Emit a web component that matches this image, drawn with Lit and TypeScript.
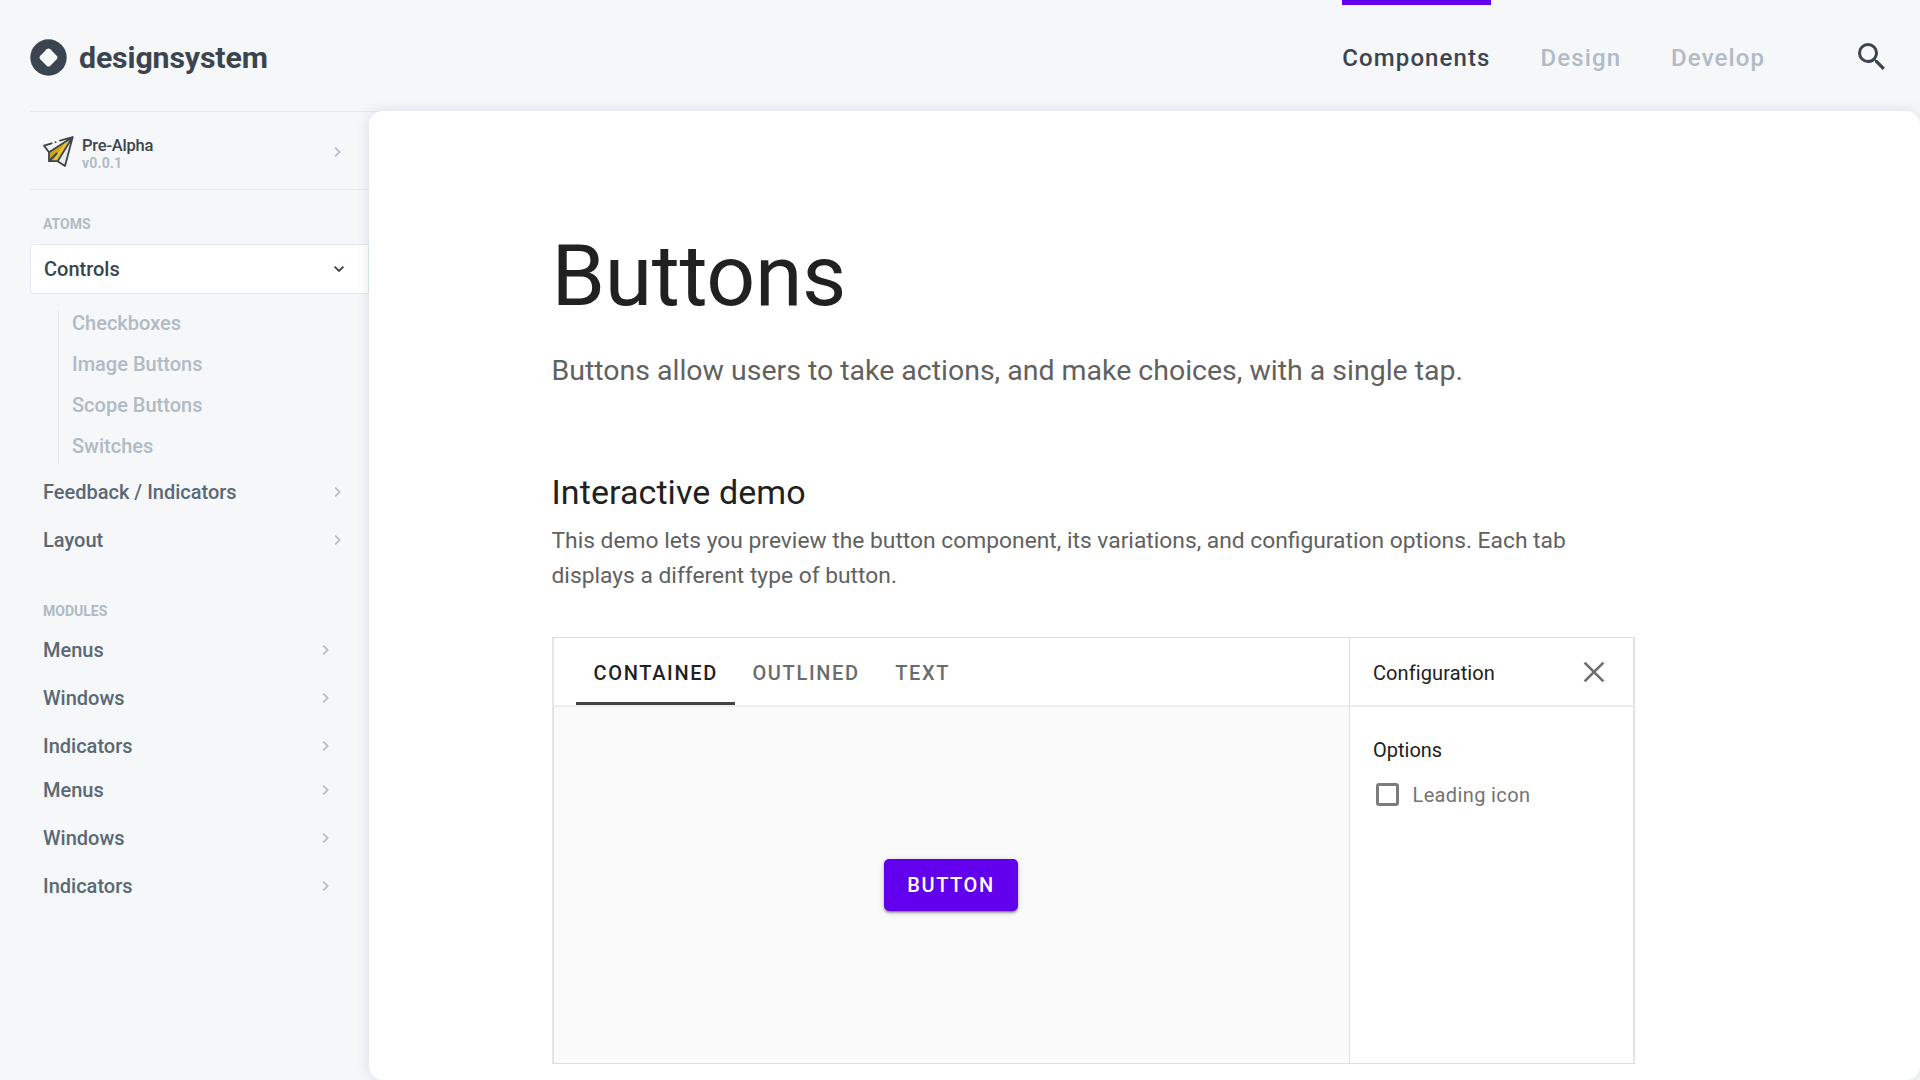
import { LitElement, html, css } from "lit";
import { customElement, property, state } from "lit/decorators.js";
import { classMap } from "lit/directives/class-map.js";

const chevronRight = html`<svg class="chev" width="10" height="12" viewBox="0 0 10 12">
  <path d="M2.2 1.6 6.6 6 2.2 10.4" fill="none" stroke="currentColor" stroke-width="1.7" /></svg>`;

const chevronDown = html`<svg class="chev" width="12" height="10" viewBox="0 0 12 10">
  <path d="M1.6 2.6 6 7 10.4 2.6" fill="none" stroke="currentColor" stroke-width="1.9" /></svg>`;

@customElement("ds-header")
class DsHeader extends LitElement {
  @state() private tabs = ["Components", "Design", "Develop"];
  @state() private active = 0;

  static styles = css`
    :host { display: flex; height: 111px; padding: 0 35px 0 30px; box-sizing: border-box; color: #3b454f; }
    .brand { display: flex; align-items: center; gap: 12px; padding-top: 4px; flex: 1; }
    .name { font-size: 30.3px; font-weight: 700; line-height: 36px; letter-spacing: -0.15px; }
    nav { display: flex; gap: 50px; }
    .tab { border-top: 5px solid transparent; line-height: 106px; font-size: 24px; font-weight: 500;
      letter-spacing: 1.1px; color: #b0bbc5; }
    .on { border-top-color: #6200ee; color: #3b454f; }
    .search { margin: 43px 0 0 93px; }
  `;

  render() {
    return html`
      <div class="brand">
        <svg width="37" height="37" viewBox="0 0 37 37">
          <circle cx="18.5" cy="18.5" r="18.2" fill="#3b454f" />
          <rect x="11.4" y="11.4" width="14.2" height="14.2" rx="2.6" fill="#f5f7f9" transform="rotate(45 18.5 18.5)" />
        </svg>
        <span class="name">designsystem</span>
      </div>
      <nav>${this.tabs.map((t, i) => html`<span class=${classMap({ tab: true, on: i === this.active })}>${t}</span>`)}</nav>
      <svg class="search" width="27" height="27" viewBox="3 3 17.5 17.5" fill="#3b454f">
        <path d="M15.5 14h-.79l-.28-.27A6.471 6.471 0 0 0 16 9.5 6.5 6.5 0 1 0 9.5 16c1.61 0 3.09-.59 4.23-1.57l.27.28v.79l5 4.99L20.49 19l-4.99-5zm-6 0C7.01 14 5 11.99 5 9.5S7.01 5 9.5 5 14 7.01 14 9.5 11.99 14 9.5 14z" />
      </svg>`;
  }
}

@customElement("ds-sidebar")
class DsSidebar extends LitElement {
  static styles = css`
    :host { display: block; width: 369px; flex: none; box-sizing: border-box; padding-left: 30px; }
    .version { display: flex; align-items: center; height: 79px; box-sizing: border-box; width: 355px;
      border-top: 1px solid #e6eaee; border-bottom: 1px solid #e6eaee; padding: 2px 42px 0 13px; color: #3b454f; }
    .plane { margin-right: 8px; }
    .labels { flex: 1; padding-top: 4px; }
    .vname { font-size: 16.5px; font-weight: 500; line-height: 19px; letter-spacing: -0.22px; }
    .vnum { font-size: 14px; font-weight: 700; line-height: 17px; color: #b0bbc5; letter-spacing: 0.15px; }
    .chev { color: #b0bbc5; display: block; }
    .heading { font-size: 14px; font-weight: 700; line-height: 20px; color: #b0bbc5; padding-left: 13px; }
    .atoms { margin-top: 24px; }
    .modules { margin: 41px 0 9px; }
    .open { display: flex; align-items: center; justify-content: space-between; height: 50px; margin-top: 10px;
      box-sizing: border-box; background: #fff; border: 1px solid #e3e9f0; border-radius: 4px 0 0 4px;
      padding: 0 23px 0 13px; font-size: 20px; font-weight: 500; color: #3b454f; }
    .open .chev { color: #3b454f; }
    .sub { display: flex; flex-direction: column; gap: 15px; border-left: 1px solid #e3e7eb; margin: 16px 0 4px 28px;
      padding: 0 0 5px 13px; font-size: 20px; font-weight: 500; line-height: 26px; color: #b0bbc5; }
    .group { display: flex; flex-direction: column; gap: 8px; }
    .group + .group { margin-top: 4px; }
    .row { display: flex; align-items: center; justify-content: space-between; height: 40px; padding: 0 26px 0 13px;
      font-size: 20px; font-weight: 500; color: #5b6875; }
    .first { padding-top: 4px; }
    .inner .row { padding-right: 38px; }
  `;

  private row(name: string) {
    return html`<div class="row"><span>${name}</span>${chevronRight}</div>`;
  }

  render() {
    const modules = ["Menus", "Windows", "Indicators"];
    return html`
      <div class="version">
        <svg class="plane" width="31" height="31" viewBox="0 0 31 31" stroke-linejoin="round" stroke-linecap="round">
          <path d="M1 10 30 1 6.5 16.5z" fill="#f2f4f6" />
          <path d="M30 1 6 16.5V25.5H14z" fill="#e8c23c" />
          <path d="M22 6.5 6 16.5V25.5L10.5 23.5z" fill="#d1a30c" />
          <path d="M30 1 14 25 21.5 30.2z" fill="#e9ebee" />
          <path d="M8.7 7.3 1 9.6 6 16.2V25.2H14.6L22 30 29.7 1 17 4.6M12.5 6.2h.1M6 16.2 29.7 1 14.6 25.2M6.8 24.5 13.6 17.5"
            fill="none" stroke="#3b454f" stroke-width="1.8" />
        </svg>
        <div class="labels"><div class="vname">Pre-Alpha</div><div class="vnum">v0.0.1</div></div>
        ${chevronRight}
      </div>
      <div class="heading atoms">ATOMS</div>
      <div class="open"><span>Controls</span>${chevronDown}</div>
      <div class="sub">${["Checkboxes", "Image Buttons", "Scope Buttons", "Switches"].map((s) => html`<span>${s}</span>`)}</div>
      <div class="group first">${["Feedback / Indicators", "Layout"].map((s) => this.row(s))}</div>
      <div class="heading modules">MODULES</div>
      <div class="group inner">${modules.map((s) => this.row(s))}</div>
      <div class="group inner">${modules.map((s) => this.row(s))}</div>`;
  }
}

@customElement("ds-demo")
class DsDemo extends LitElement {
  @property({ type: Number }) active = 0;

  static styles = css`
    :host { display: grid; grid-template-columns: 1fr 284px; width: 1083px; height: 427px; box-sizing: border-box;
      border: 1px solid #dedede; border-width: 1px 2px; border-left-color: #e4e4e4; border-right-color: #e4e4e4;
      background: #fff; }
    .left, .right { display: flex; flex-direction: column; }
    .right { border-left: 1px solid #dedede; }
    .bar { display: flex; height: 69px; box-sizing: border-box; border-bottom: 2px solid #eee; }
    .tabs { padding-left: 22px; }
    .tab { padding: 7px 18.5px 0 17px; border-bottom: 3px solid transparent; line-height: 57px; font-size: 20px;
      font-weight: 500; letter-spacing: 1.66px; color: #6b6b6b; }
    .on { color: #212121; border-bottom-color: #444; padding: 7px 17.5px 0 17.5px; }
    .stage { flex: 1; display: flex; align-items: center; justify-content: center; background: #fafafa; }
    .btn { width: 134px; height: 52px; margin-right: 2px; border: 0; border-radius: 5px; background: #6200ee; color: #fff;
      font: 500 20px Roboto, sans-serif; letter-spacing: 1.6px; padding: 0 0 0 1px;
      box-shadow: 0 3px 2px -2px rgba(0,0,0,.35), 0 2px 3px rgba(0,0,0,.2), 0 1px 6px rgba(0,0,0,.15); }
    .config { align-items: center; justify-content: space-between; padding: 3px 28.5px 0 23px; font-size: 20px;
      letter-spacing: 0.1px; color: #212121; }
    .close { margin-bottom: 1px; }
    .options { padding: 30px 0 0 23px; font-size: 20px; line-height: 26px; color: #212121; }
    .check { display: flex; align-items: center; gap: 14px; margin: 19px 0 0 2.5px; color: #737373; letter-spacing: 0.37px; }
    .box { width: 23px; height: 23px; box-sizing: border-box; border: 3px solid #7c7c7c; border-radius: 3px; }
  `;

  render() {
    return html`
      <div class="left">
        <div class="bar tabs">${["CONTAINED", "OUTLINED", "TEXT"].map(
          (t, i) => html`<span class=${classMap({ tab: true, on: i === this.active })}>${t}</span>`
        )}</div>
        <div class="stage"><button class="btn">BUTTON</button></div>
      </div>
      <div class="right">
        <div class="bar config"><span>Configuration</span>
          <svg class="close" width="22" height="22" viewBox="0 0 22 22"><path d="M1.6 1.6 20.4 20.4M20.4 1.6 1.6 20.4" stroke="#6f6f6f" stroke-width="2.7" /></svg>
        </div>
        <div class="options">Options
          <div class="check"><span class="box"></span><span>Leading icon</span></div>
        </div>
      </div>`;
  }
}

@customElement("app-root")
class AppRoot extends LitElement {
  static styles = css`
    :host { display: block; width: 1920px; height: 1080px; overflow: hidden; background: #f5f7f9;
      font-family: Roboto, "Liberation Sans", sans-serif; }
    .body { display: flex; height: 969px; }
    main { flex: 1; position: relative; box-sizing: border-box; padding: 115px 0 0 182.5px; background: #fff; border-radius: 14px;
      box-shadow: 0 0 14px rgba(59,80,100,.14); }
    h1 { margin: 0; font-size: 86px; font-weight: 400; line-height: 100px; letter-spacing: -0.4px; color: #212121; }
    .lead { margin: 25px 0 0; font-size: 28.48px; line-height: 40px; color: #616161; }
    h2 { margin: 79px 0 0; font-size: 34px; font-weight: 400; line-height: 44px; letter-spacing: 0.08px; color: #212121; }
    .text { margin: 10.4px 0 43.6px; font-size: 22.8px; line-height: 34.4px; color: #616161; }
    ds-demo { margin-left: 0.5px; }
  `;

  render() {
    return html`
      <ds-header></ds-header>
      <div class="body">
        <ds-sidebar></ds-sidebar>
        <main>
          <h1>Buttons</h1>
          <p class="lead">Buttons allow users to take actions, and make choices, with a single tap.</p>
          <h2>Interactive demo</h2>
          <p class="text">This demo lets you preview the button component, its variations, and configuration options. Each tab<br />displays a different type of button.</p>
          <ds-demo></ds-demo>
        </main>
      </div>`;
  }
}
